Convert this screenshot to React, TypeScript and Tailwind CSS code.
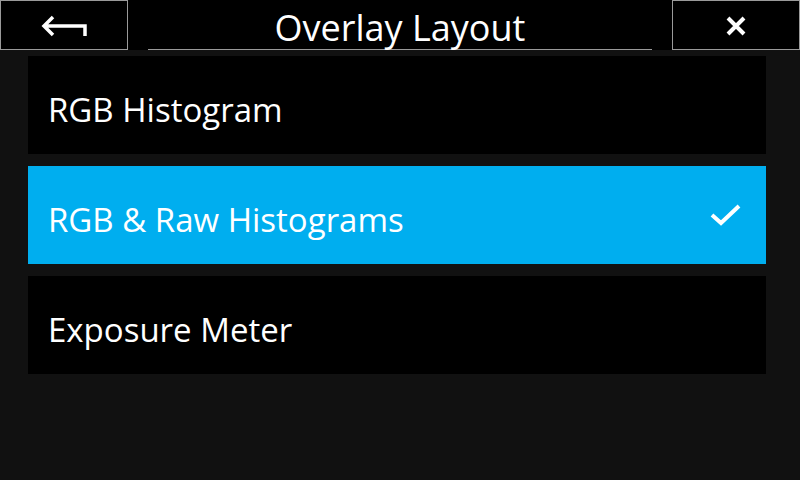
const items = [
  { label: "RGB Histogram", selected: false },
  { label: "RGB & Raw Histograms", selected: true },
  { label: "Exposure Meter", selected: false },
];

function BackIcon() {
  return (
    <svg width="48" height="24" viewBox="0 0 48 24" fill="none">
      <path
        d="M12 3 L3 12 L12 21 M3 12 H44 V22"
        stroke="white"
        strokeWidth="3.5"
        strokeLinejoin="miter"
      />
    </svg>
  );
}

function CloseIcon() {
  return (
    <svg width="20" height="20" viewBox="0 0 20 20" fill="none">
      <path d="M2 2 L18 18 M18 2 L2 18" stroke="white" strokeWidth="4" />
    </svg>
  );
}

function CheckIcon() {
  return (
    <svg width="32" height="26" viewBox="0 0 32 26" fill="none">
      <path d="M2 13 L11 21 L29 4" stroke="white" strokeWidth="4" />
    </svg>
  );
}

export default function App() {
  return (
    <div
      className="w-[800px] h-[480px] bg-[#111111] flex flex-col text-white"
      style={{ fontFamily: '"Open Sans", "Noto Sans", sans-serif' }}
    >
      {/* Header */}
      <div className="h-[50px] bg-black flex">
        <button className="w-[128px] h-[50px] border border-[#9a9a9a] flex items-center justify-center pl-[2px] pt-[1px]">
          <BackIcon />
        </button>
        <div className="flex-1 flex px-[20px]">
          <div className="flex-1 h-[50px] border-b border-[#9a9a9a] flex items-center justify-center pt-[6px] text-[36px] leading-none">
            Overlay Layout
          </div>
        </div>
        <button className="w-[128px] h-[50px] border border-[#9a9a9a] flex items-center justify-center pr-[1px] pt-[1px]">
          <CloseIcon />
        </button>
      </div>

      {/* List */}
      <div className="flex flex-col gap-[12px] px-[28px] pt-[6px] pr-[34px]">
        {items.map((item) => (
          <div
            key={item.label}
            className={`h-[98px] flex items-center justify-between pl-[20px] pr-[24px] pt-[8px] ${
              item.selected ? "bg-[#00aeef]" : "bg-black"
            }`}
          >
            <span className="text-[33px] leading-none">{item.label}</span>
            {item.selected && (
              <span className="-mt-[8px]">
                <CheckIcon />
              </span>
            )}
          </div>
        ))}
      </div>
    </div>
  );
}
